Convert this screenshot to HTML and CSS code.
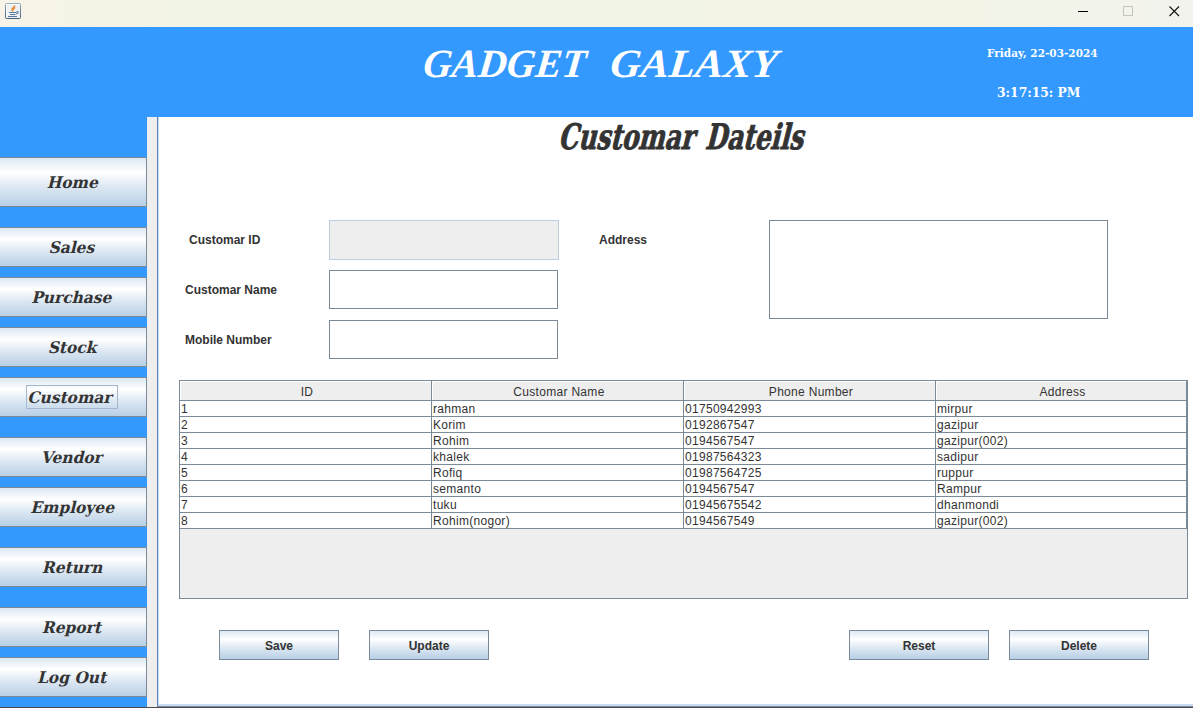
FILE: index.html
```html
<!DOCTYPE html>
<html lang="en">
<head>
<meta charset="utf-8">
<title>Gadget Galaxy</title>
<link rel="stylesheet" href="styles.css">
</head>
<body>
<div class="window">
  <div class="titlebar">
    <svg class="java" width="16" height="16" viewBox="0 0 16 16">
      <defs><linearGradient id="cup" x1="0" y1="0" x2="0" y2="1"><stop offset="0" stop-color="#93aebf"/><stop offset="1" stop-color="#3d6078"/></linearGradient></defs>
      <rect x=".5" y=".5" width="15" height="15" rx="1" fill="#f0f1f2" stroke="url(#cup)"/>
      <path d="M1.5 14V1.500H14" fill="none" stroke="#fff"/>
      <path d="M9.800 2.200c.5 1.900-3.300 2.800-2.900 4.500.1.700.8 1 .8 1.700M10.200 4.600c-1.700.8-2 1.500-1.500 2.500" fill="none" stroke="#e58a35" stroke-width="1.400"/>
      <path d="M4 9.500h7.500M5 11.500h5.500M11.500 8.500c2.500-.3 2 2.500-.5 2.500M3 13.500h9" fill="none" stroke="#57799c" stroke-width="1.100"/>
    </svg>
    <svg class="controls" width="104" height="14" viewBox="0 0 104 14">
      <path d="M0 6.500h10" stroke="#000"/>
      <rect x="45.500" y="1.500" width="9" height="9" fill="none" stroke="#c3c4bf"/>
      <path d="M91.500 1.500l9.500 9.500M101 1.500l-9.500 9.500" stroke="#1a1a1a" stroke-width="1.200"/>
    </svg>
  </div>
  <header class="banner">
    <h1 class="brand"><span class="brand-a">GADGET</span><span class="brand-b">GALAXY</span></h1>
    <div class="clock"><span class="date">Friday, 22-03-2024</span><span class="time">3:17:15: PM</span></div>
  </header>
  <div class="body">
    <nav class="sidebar">
      <button class="nav home"><span>Home</span></button>
      <button class="nav gap"><span>Sales</span></button>
      <button class="nav"><span>Purchase</span></button>
      <button class="nav"><span>Stock</span></button>
      <button class="nav focus"><span>Customar</span></button>
      <button class="nav gap"><span>Vendor</span></button>
      <button class="nav"><span>Employee</span></button>
      <button class="nav gap"><span>Return</span></button>
      <button class="nav gap"><span>Report</span></button>
      <button class="nav"><span>Log Out</span></button>
    </nav>
    <main class="frame">
      <h2 class="heading"><span class="head-a">Customar</span><span class="head-b">Dateils</span></h2>
      <div class="form">
        <div class="fields">
          <span class="label indent">Customar ID</span><div class="field disabled"></div>
          <span class="label">Customar Name</span><div class="field"></div>
          <span class="label">Mobile Number</span><div class="field"></div>
        </div>
        <span class="label address-label">Address</span>
        <div class="field area"></div>
      </div>
      <div class="scroll">
        <table>
          <colgroup><col class="col"><col class="col"><col class="col"><col></colgroup>
          <thead><tr><th>ID</th><th>Customar Name</th><th>Phone Number</th><th>Address</th></tr></thead>
          <tbody>
            <tr><td>1</td><td>rahman</td><td>01750942993</td><td>mirpur</td></tr>
            <tr><td>2</td><td>Korim</td><td>0192867547</td><td>gazipur</td></tr>
            <tr><td>3</td><td>Rohim</td><td>0194567547</td><td>gazipur(002)</td></tr>
            <tr><td>4</td><td>khalek</td><td>01987564323</td><td>sadipur</td></tr>
            <tr><td>5</td><td>Rofiq</td><td>01987564725</td><td>ruppur</td></tr>
            <tr><td>6</td><td>semanto</td><td>0194567547</td><td>Rampur</td></tr>
            <tr><td>7</td><td>tuku</td><td>01945675542</td><td>dhanmondi</td></tr>
            <tr><td>8</td><td>Rohim(nogor)</td><td>0194567549</td><td>gazipur(002)</td></tr>
          </tbody>
        </table>
      </div>
      <div class="actions">
        <button class="action">Save</button><button class="action">Update</button>
        <button class="action wide push">Reset</button><button class="action wide">Delete</button>
      </div>
    </main>
  </div>
</div>
</body>
</html>
```
FILE: styles.css
```css
*, *::before { box-sizing: border-box; }
body { margin: 0; overflow: hidden; font-family: "Liberation Sans", sans-serif; font-size: 12px; color: #333; }
h1, h2 { margin: 0; }
.window { width: 1193px; height: 708px; display: flex; flex-direction: column; background: #eee; border-bottom: 1px solid #4b4b4d; }
.titlebar { height: 27px; flex: none; display: flex; justify-content: space-between; padding: 3px 11px 0 5px; background: linear-gradient(90deg, #f8f3e8, #f2f4e6 16%, #f3f4e6 80%, #f3f3ee); }
.controls { margin-top: 2px; }
.banner { height: 90px; flex: none; background: #39f; color: #fff; display: flex; }
.brand { width: 960px; padding: 14px 0 0 422px; display: flex; font: italic bold 40px/46px "Liberation Serif", serif; }
.brand span { display: block; transform-origin: 0 50%; white-space: nowrap; transform: skewX(-6deg) scaleX(.99); }
.brand-a { width: 187px; }
.brand .brand-b { transform: skewX(-6deg) scaleX(1.06); }
.clock { display: flex; flex-direction: column; align-items: flex-start; font-family: "DejaVu Serif", serif; font-weight: bold; white-space: nowrap; }
.date { margin: 19px 0 0 27px; font-size: 11px; line-height: 16px; transform-origin: 0 50%; transform: scaleX(.955); }
.time { margin: 22px 0 0 37px; font-size: 13px; line-height: 18px; transform-origin: 0 50%; transform: scaleX(.945); }
.body { flex: 1; display: flex; min-height: 0; }
.sidebar { width: 147px; background: #39f; padding-top: 40px; display: flex; flex-direction: column; }
.nav, .action { border: 1px solid #7a8a99; padding: 0; background: linear-gradient(#dde8f3, #fff 30%, #dde8f3 60%, #b8cfe5); color: #333; }
.nav { height: 40px; flex: none; border-left: 0; font: bold 16px/22px "DejaVu Serif", serif; display: grid; place-items: center; margin-top: 10px; }
.nav span { grid-area: 1 / 1; transform: translateY(1px) skewX(-14deg) scaleX(.965); }
.nav.home { height: 50px; margin-top: 0; }
.nav.gap { margin-top: 20px; }
.nav.focus::before { content: ""; grid-area: 1 / 1; width: 92px; height: 24px; margin-right: 3px; border: 1px solid #a3b8cc; }
.nav.focus span { margin-right: 4px; }
.frame { flex: 1; margin-left: 10px; background: #fff; border-left: 1px solid #5e83bb; border-bottom: 1px solid #7a8a99; box-shadow: inset 1px 0 #c8ddf2, inset 0 -2px #c8ddf2; display: flex; flex-direction: column; }
.heading { height: 103px; display: flex; padding-left: 395px; font: bold 35px/40px "DejaVu Serif", serif; -webkit-text-stroke: .9px #333; }
.heading span { display: block; white-space: nowrap; transform-origin: 0 50%; transform: skewX(-14deg) scaleX(.71); }
.head-a { width: 147px; }
.form { height: 160px; display: flex; align-items: flex-start; padding-left: 27px; }
.fields { display: grid; grid-template-columns: 144px 230px; grid-auto-rows: 40px; row-gap: 10px; width: 414px; }
.label { font-weight: bold; line-height: 41px; white-space: nowrap; }
.indent { padding-left: 4px; }
.field { width: 229px; height: 39px; border: 1px solid #7a8a99; background: #fff; }
.field.disabled { width: 230px; height: 40px; border-color: #b8cfe5; background: #eee; }
.address-label { width: 170px; }
.field.area { width: 339px; height: 99px; }
.scroll { margin-left: 21px; width: 1009px; height: 219px; border: 1px solid #7a8a99; background: #eee; }
table { width: 1007px; table-layout: fixed; border-collapse: separate; border-spacing: 0; letter-spacing: .3px; }
.col { width: 252px; }
th, td { border-right: 1px solid #7a8a99; border-bottom: 1px solid #7a8a99; white-space: nowrap; }
th { height: 20px; padding: 3px 0 0 3px; font-weight: normal; line-height: 16px; background: #eee; box-shadow: inset 1px 1px #fff; }
td { height: 16px; padding: 1px 0 0 1px; line-height: 14px; background: #fff; text-align: left; }
.actions { display: flex; gap: 30px; padding: 31px 0 0 61px; }
.action { width: 120px; height: 30px; padding-top: 2px; font: bold 12px "Liberation Sans", sans-serif; }
.action.wide { width: 140px; }
.action.push { margin-left: 330px; }
.action.wide:last-child { margin-left: -10px; }
```
